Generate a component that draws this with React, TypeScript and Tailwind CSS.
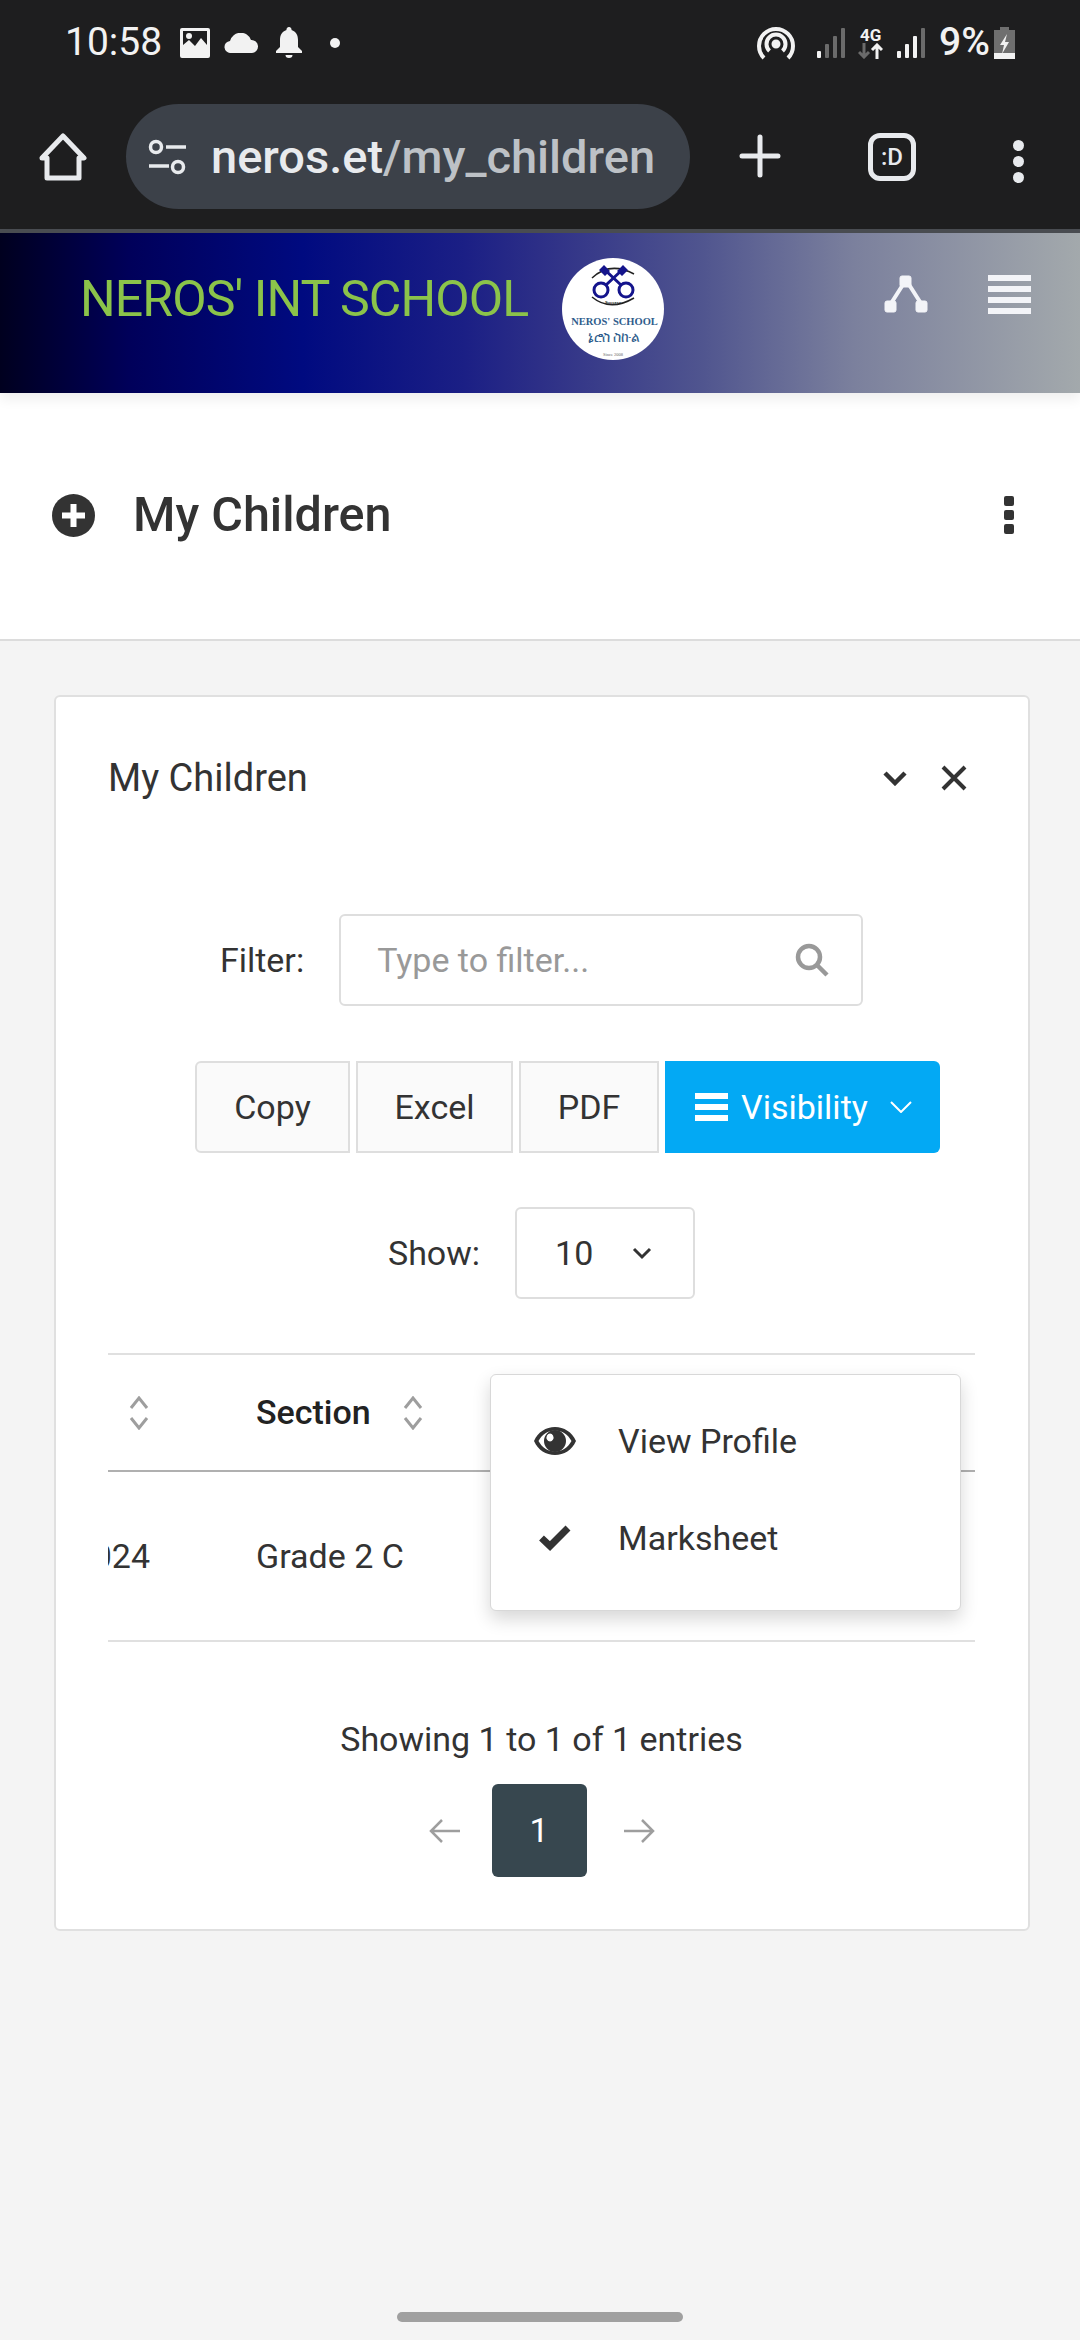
import React from 'react';

const SortIcon = () => (
    <svg className="w-[20px] h-[34px]" viewBox="0 0 20 34" fill="none" stroke="#9e9e9e" strokeWidth="3">
        <path d="M2 12 10 2l8 10" />
        <path d="M2 22l8 10 8-10" />
    </svg>
);

const Signal = ({ full }: { full: boolean }) => (
    <svg className="w-[28px] h-[30px]" viewBox="0 0 28 30">
        <rect x="0" y="23" width="4" height="7" rx="1" fill="#f2f2f2" />
        <rect x="8" y="16" width="4" height="14" rx="1" fill={full ? '#f2f2f2' : '#6b6b6b'} />
        <rect x="16" y="8" width="4" height="22" rx="1" fill={full ? '#f2f2f2' : '#6b6b6b'} />
        <rect x="24" y="0" width="4" height="30" rx="1" fill="#6b6b6b" />
    </svg>
);

const Logo = () => (
    <div className="w-[102px] h-[102px] rounded-full bg-white overflow-hidden mt-[25px] shrink-0">
        <svg viewBox="0 0 102 102" className="w-full h-full">
            <path d="M30 20Q48 3 72 16" fill="none" stroke="#222" strokeWidth="1.500" />
            <path d="M30 39Q48 54 72 40" fill="none" stroke="#222" strokeWidth="1.500" />
            <g fill="none" stroke="#14148c" strokeWidth="3">
                <circle cx="39" cy="32" r="7" />
                <circle cx="64" cy="32" r="7" />
                <path d="M44 27 60 12M59 27 43 12" />
            </g>
            <path d="M37 12l5-5 6 6-5 5zM66 12l-5-5-6 6 5 5z" fill="#14148c" />
            <text x="51" y="46" textAnchor="middle" fontFamily="'Liberation Sans', sans-serif" fontWeight="700" fontSize="4" fill="#222">Success</text>
            <text x="52.500" y="67" textAnchor="middle" fontFamily="'Liberation Serif', serif" fontWeight="700" fontSize="10.500" fill="#2f5d8c">NEROS' SCHOOL</text>
            <text x="52" y="84" textAnchor="middle" fontFamily="'Noto Sans', 'DejaVu Sans', sans-serif" fontSize="14" fill="#2f5d8c">ኔሮስ ስኩል</text>
            <text x="51" y="98" textAnchor="middle" fontFamily="'Liberation Serif', serif" fontSize="4.500" fill="#666">Since 2008</text>
        </svg>
    </div>
);

const StatusBar = () => (
    <div className="h-[104px] flex items-center pl-[65px] pb-[19px] text-[#f2f2f2]">
        <span className="text-[39px] leading-none w-[115px]">10:58</span>
        <svg className="w-[30px] h-[30px]" viewBox="0 0 30 30">
            <path fillRule="evenodd" d="M2 0h26a2 2 0 0 1 2 2v26a2 2 0 0 1-2 2H2a2 2 0 0 1-2-2V2a2 2 0 0 1 2-2zm1 3v14l6-5 6 6 6-8 6 7V3z" fill="#f2f2f2" />
            <circle cx="9" cy="8" r="3" fill="#f2f2f2" />
        </svg>
        <svg className="w-[35px] h-[20px] ml-[14px]" viewBox="0 0 35 20">
            <path d="M7 20a6 6 0 0 1-1-12 11 11 0 0 1 21-1 6.5 6.5 0 0 1 1 13z" fill="#f2f2f2" />
        </svg>
        <svg className="w-[26px] h-[31px] ml-[17px]" viewBox="0 0 26 31">
            <path d="M13 0a2.5 2.5 0 0 1 2.5 3C20 4.500 22 8 22 13v7l4 4v2H0v-2l4-4v-7c0-5 2-8.500 6.500-10A2.500 2.500 0 0 1 13 0zM9.500 28h7a3.500 3 0 0 1-7 0z" fill="#f2f2f2" />
        </svg>
        <span className="w-[10px] h-[10px] rounded-full bg-[#f2f2f2] ml-[28px]" />
        <div className="flex items-center ml-auto pr-[65px]">
            <svg className="w-[38px] h-[34px]" viewBox="0 0 38 34" fill="none" stroke="#f2f2f2" strokeWidth="4">
                <path d="M7 32A17 17 0 1 1 31 32" />
                <path d="M12.500 25A9.500 9.500 0 1 1 25.500 25" />
                <circle cx="19" cy="18" r="2.500" fill="#f2f2f2" />
            </svg>
            <div className="ml-[22px]"><Signal full={false} /></div>
            <div className="ml-[13px] w-[25px] flex flex-col items-center">
                <span className="text-[17px] leading-[16px] font-bold">4G</span>
                <svg className="w-[25px] h-[16px]" viewBox="0 0 25 16" fill="none" strokeWidth="3">
                    <path d="M6 0v13M1 9l5 5 5-5" stroke="#6b6b6b" />
                    <path d="M19 16V3M14 7l5-5 5 5" stroke="#f2f2f2" />
                </svg>
            </div>
            <div className="ml-[14px]"><Signal full={true} /></div>
            <span className="ml-[14px] text-[39px] leading-none font-medium">9%</span>
            <svg className="w-[21px] h-[32px] ml-[4px]" viewBox="0 0 21 32">
                <path d="M6 0h9v3h6v29H0V3h6z" fill="#6f6f6f" />
                <path d="M0 26h21v6H0z" fill="#f2f2f2" />
                <path d="M13 7 6 18h4l-2 9 7-12h-4z" fill="#f2f2f2" />
            </svg>
        </div>
    </div>
);

const Toolbar = () => (
    <div className="h-[125px] flex items-start text-[#e8eaed]">
        <svg className="w-[48px] h-[48px] ml-[39px] mt-[29px]" viewBox="0 0 48 48" fill="none" stroke="#e8eaed" strokeWidth="5" strokeLinejoin="round">
            <path d="M3 25 24 3l21 22h-5v20H8V25z" />
        </svg>
        <div className="ml-[39px] w-[564px] h-[105px] rounded-full bg-[#3c4149] flex items-center pl-[22px]">
            <svg className="w-[39px] h-[36px]" viewBox="0 0 39 36" fill="none" stroke="#e8eaed" strokeWidth="3.500">
                <circle cx="8" cy="8" r="5.500" />
                <path d="M18 8h20M1 27h20" />
                <circle cx="30" cy="28" r="5.500" />
            </svg>
            <span className="ml-[24px] text-[47px] leading-none font-medium">
                neros.et<span className="text-[#bdc1c6]">/my_children</span>
            </span>
        </div>
        <svg className="w-[42px] h-[44px] ml-[49px] mt-[30px]" viewBox="0 0 42 44" stroke="#e8eaed" strokeWidth="5" strokeLinecap="round">
            <path d="M21 3v38M3 22h36" />
        </svg>
        <div className="ml-[87px] mt-[29px] w-[48px] h-[48px] rounded-[12px] border-[5px] border-[#e8eaed] flex items-center justify-center text-[24px] font-medium">
            :D
        </div>
        <div className="ml-[97px] mt-[36px] flex flex-col gap-[5px]">
            <span className="w-[11px] h-[11px] rounded-full bg-[#e8eaed]" />
            <span className="w-[11px] h-[11px] rounded-full bg-[#e8eaed]" />
            <span className="w-[11px] h-[11px] rounded-full bg-[#e8eaed]" />
        </div>
    </div>
);

const SchoolHeader = () => (
    <div className="h-[160px] flex items-start pl-[80px] bg-[linear-gradient(to_right,#00001f_0%,#00005a_12%,#000a80_28%,#1b1f85_43%,#2d2f87_50%,#50558f_65%,#7b809d_79%,#a3a9ac_100%)] shadow-[0_6px_12px_rgba(0,0,0,0.07)] relative">
        <span className="w-[482px] mt-[41px] text-[50px] leading-none text-[#8bc34a] tracking-[-0.9px]">NEROS' INT SCHOOL</span>
        <Logo />
        <svg className="w-[44px] h-[38px] ml-[220px] mt-[42px]" viewBox="0 0 44 38" fill="#f3f4f8" stroke="#f3f4f8">
            <rect x="16" y="1" width="11" height="11" rx="2" />
            <rect x="1" y="26" width="11" height="11" rx="2" />
            <rect x="32" y="26" width="11" height="11" rx="2" />
            <path d="M20 8 6 30M24 8l14 22" strokeWidth="4" fill="none" />
        </svg>
        <div className="ml-[60px] mt-[42px] flex flex-col gap-[5px]">
            <span className="w-[43px] h-[6px] bg-[#f3f4f8]" />
            <span className="w-[43px] h-[6px] bg-[#f3f4f8]" />
            <span className="w-[43px] h-[6px] bg-[#f3f4f8]" />
            <span className="w-[43px] h-[6px] bg-[#f3f4f8]" />
        </div>
    </div>
);

const PageTitle = () => (
    <div className="h-[248px] bg-white border-b-2 border-[#dcdcdc] flex items-center pl-[52px] pr-[66px] pb-[2px] text-[#333]">
        <svg className="w-[43px] h-[43px]" viewBox="0 0 43 43">
            <circle cx="21.500" cy="21.500" r="21.500" fill="#333" />
            <path d="M21.500 10v23M10 21.500h23" stroke="#fff" strokeWidth="6" />
        </svg>
        <h1 className="ml-[38px] text-[48.5px] leading-none font-medium">My Children</h1>
        <div className="ml-auto flex flex-col gap-[4px]">
            <span className="w-[10px] h-[10px] bg-[#333] rounded-[2px]" />
            <span className="w-[10px] h-[10px] bg-[#333] rounded-[2px]" />
            <span className="w-[10px] h-[10px] bg-[#333] rounded-[2px]" />
        </div>
    </div>
);

const DropdownMenu = () => (
    <div className="absolute top-[19px] left-[382px] w-[471px] h-[237px] bg-white border border-[#d8d8d8] rounded-[6px] shadow-[0_8px_18px_rgba(0,0,0,0.16)] pt-[18px] text-[34px] text-[#333]">
        <div className="h-[96px] flex items-center">
            <svg className="w-[42px] h-[28px] ml-[43px]" viewBox="0 0 42 28">
                <path fillRule="evenodd" d="M21 0c9 0 17 5 21 14-4 9-12 14-21 14S4 23 0 14C4 5 12 0 21 0zM4.500 14C8 20.500 14 24.500 21 24.500S34 20.500 37.500 14C34 7.500 28 3.500 21 3.500S8 7.500 4.500 14z" fill="#333" />
                <path fillRule="evenodd" d="M21 3a11 11 0 1 1 0 22 11 11 0 0 1 0-22zm-5 3.500a3.500 4 0 1 0 .01 0z" fill="#333" />
            </svg>
            <span className="ml-[42px]">View Profile</span>
        </div>
        <div className="h-[98px] flex items-center">
            <svg className="w-[32px] h-[26px] ml-[48px]" viewBox="0 0 32 26" fill="none" stroke="#333" strokeWidth="7">
                <path d="M2.500 13 11 21 29 3" />
            </svg>
            <span className="ml-[47px]">Marksheet</span>
        </div>
    </div>
);

const Card = () => (
    <div className="mt-[54px] ml-[54px] w-[976px] h-[1236px] bg-white border-2 border-[#e0e0e0] rounded-[6px] pl-[52px] pr-[53px] text-[34px] text-[#333]">
        <div className="h-[162px] flex items-center">
            <span className="text-[38px]">My Children</span>
            <svg className="w-[24px] h-[16px] ml-auto" viewBox="0 0 24 16" fill="none" stroke="#333" strokeWidth="4.500">
                <path d="M2 3l10 10L22 3" />
            </svg>
            <svg className="w-[26px] h-[26px] ml-[34px] mr-[8px]" viewBox="0 0 26 26" stroke="#333" strokeWidth="4">
                <path d="M2 2l22 22M24 2 2 24" />
            </svg>
        </div>

        <div className="mt-[55px] flex items-center justify-center">
            <label>Filter:</label>
            <div className="ml-[35px] w-[524px] h-[92px] border-2 border-[#dedede] rounded-[6px] flex items-center pl-[36px] pr-[32px] text-[#999]">
                <span>Type to filter...</span>
                <svg className="w-[34px] h-[34px] ml-auto" viewBox="0 0 34 34" fill="none" stroke="#999" strokeWidth="4.500">
                    <circle cx="14" cy="14" r="11" />
                    <path d="M22 22l10 10" />
                </svg>
            </div>
        </div>

        <div className="mt-[55px] pl-[87px] flex items-stretch h-[92px]">
            <div className="w-[155px] bg-[#fafafa] border-2 border-[#dedede] rounded-l-[6px] flex items-center justify-center">Copy</div>
            <div className="w-[157px] ml-[6px] bg-[#fafafa] border-2 border-[#dedede] flex items-center justify-center">Excel</div>
            <div className="w-[140px] ml-[6px] bg-[#fafafa] border-2 border-[#dedede] flex items-center justify-center">PDF</div>
            <div className="w-[275px] ml-[6px] bg-[#03a9f4] rounded-r-[6px] flex items-center pl-[30px] text-white">
                <div className="w-[33px] flex flex-col gap-[5px]">
                    <span className="h-[6px] bg-white" />
                    <span className="h-[6px] bg-white" />
                    <span className="h-[6px] bg-white" />
                </div>
                <span className="ml-[13px]">Visibility</span>
                <svg className="w-[22px] h-[12px] ml-[22px]" viewBox="0 0 22 12" fill="none" stroke="#fff" strokeWidth="2">
                    <path d="M1 1l10 10L21 1" />
                </svg>
            </div>
        </div>

        <div className="mt-[54px] flex items-center justify-center">
            <label>Show:</label>
            <div className="ml-[35px] w-[180px] h-[92px] border-2 border-[#dedede] rounded-[6px] flex items-center pl-[38px]">
                <span>10</span>
                <svg className="w-[20px] h-[13px] ml-[39px]" viewBox="0 0 20 13" fill="none" stroke="#333" strokeWidth="3">
                    <path d="M2 2l8 8 8-8" />
                </svg>
            </div>
        </div>

        <div className="mt-[54px] relative border-y-2 border-[#e0e0e0]">
            <div className="h-[117px] border-b-2 border-[#b0b0b0] flex items-center">
                <div className="ml-[21px]"><SortIcon /></div>
                <span className="ml-[107px] font-medium text-[#222]">Section</span>
                <div className="ml-[32px]"><SortIcon /></div>
            </div>
            <div className="h-[168px] flex items-center">
                <div className="w-[42px] overflow-hidden flex justify-end">
                    <span>2024</span>
                </div>
                <span className="ml-[106px]">Grade 2 C</span>
            </div>
            <DropdownMenu />
        </div>

        <div className="mt-[72px] text-center leading-[50px]">Showing 1 to 1 of 1 entries</div>

        <div className="mt-[20px] flex items-center justify-center">
            <svg className="w-[31px] h-[24px]" viewBox="0 0 31 24" fill="none" stroke="#9e9e9e" strokeWidth="2.500">
                <path d="M31 12H2M13 1 2 12l11 11" />
            </svg>
            <div className="ml-[32px] w-[95px] h-[93px] bg-[#37474f] rounded-[6px] flex items-center justify-center text-white">1</div>
            <svg className="w-[31px] h-[24px] ml-[37px]" viewBox="0 0 31 24" fill="none" stroke="#9e9e9e" strokeWidth="2.500">
                <path d="M0 12h29M18 1l11 11-11 11" />
            </svg>
        </div>
    </div>
);

export default function App() {
    return (
        <div className="w-[1080px] h-[2340px] bg-[#f4f4f4] flex flex-col font-['Roboto',sans-serif]">
            <div className="bg-[#1e1e1f]">
                <StatusBar />
                <Toolbar />
            </div>
            <div className="h-[4px] bg-[#4a4d52]" />
            <SchoolHeader />
            <PageTitle />
            <Card />
            <div className="mt-auto mb-[18px] mx-auto w-[286px] h-[10px] rounded-full bg-[#a0a0a0]" />
        </div>
    );
}
